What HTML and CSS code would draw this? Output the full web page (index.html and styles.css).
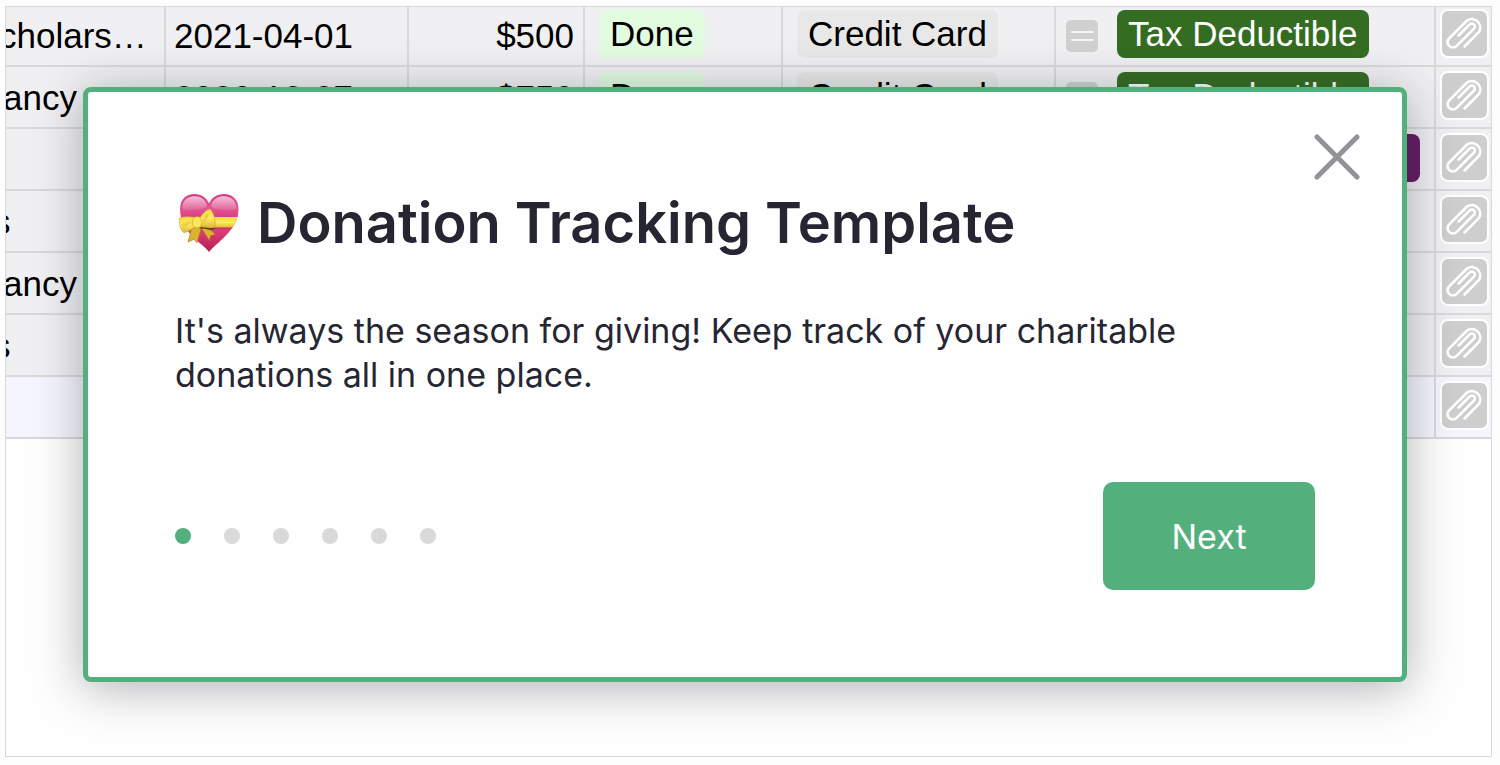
FILE: index.html
```html
<!DOCTYPE html>
<html lang="en">
<head>
<meta charset="utf-8">
<title>Donation Tracking Template</title>
<link rel="stylesheet" href="styles.css">
</head>
<body>
<svg class="defs" aria-hidden="true">
  <symbol id="clip" viewBox="0 0 138 138">
    <path d="M69 109 L113 65 A26 26 0 0 0 77 29 L22 84 A16 16 0 0 0 45 107 L98 54 A9 9 0 0 0 85 41 L51 75" fill="none" stroke="#fff" stroke-width="8" stroke-linecap="round" stroke-linejoin="round"/>
  </symbol>
  <symbol id="formula" viewBox="0 0 32 32">
    <path d="M6 12H27M6 20H27" stroke="#f5f5f5" stroke-width="2" stroke-linecap="round"/>
  </symbol>
</svg>
<main class="frame">
  <table class="grid">
    <colgroup>
      <col class="col-org"><col class="col-date"><col class="col-amount"><col class="col-status"><col class="col-method"><col class="col-tax"><col class="col-file">
    </colgroup>
    <tbody>
      <tr>
        <td class="org org-mid">cholars…</td><td class="plain">2021-04-01</td><td class="amount">$500</td>
        <td><span class="tag done">Done</span></td><td><span class="tag method">Credit Card</span></td>
        <td><div class="tax"><svg class="formula"><use href="#formula"/></svg><span class="tag deductible">Tax Deductible</span></div></td>
        <td class="file"><button class="attach" aria-label="Attachment"><svg><use href="#clip"/></svg></button></td>
      </tr>
      <tr>
        <td class="org org-far">ancy</td><td class="plain">2020-12-27</td><td class="amount">$750</td>
        <td><span class="tag done">Done</span></td><td><span class="tag method">Credit Card</span></td>
        <td><div class="tax"><svg class="formula"><use href="#formula"/></svg><span class="tag deductible">Tax Deductible</span></div></td>
        <td class="file"><button class="attach" aria-label="Attachment"><svg><use href="#clip"/></svg></button></td>
      </tr>
      <tr>
        <td></td><td></td><td></td><td></td><td></td>
        <td><div class="tax"><svg class="formula"><use href="#formula"/></svg><span class="tag other"></span></div></td>
        <td class="file"><button class="attach" aria-label="Attachment"><svg><use href="#clip"/></svg></button></td>
      </tr>
      <tr>
        <td class="org">s</td><td></td><td></td><td></td><td></td><td></td>
        <td class="file"><button class="attach" aria-label="Attachment"><svg><use href="#clip"/></svg></button></td>
      </tr>
      <tr>
        <td class="org org-far">ancy</td><td></td><td></td><td></td><td></td><td></td>
        <td class="file"><button class="attach" aria-label="Attachment"><svg><use href="#clip"/></svg></button></td>
      </tr>
      <tr>
        <td class="org">s</td><td></td><td></td><td></td><td></td><td></td>
        <td class="file"><button class="attach" aria-label="Attachment"><svg><use href="#clip"/></svg></button></td>
      </tr>
      <tr class="new-row">
        <td></td><td></td><td></td><td></td><td></td><td></td>
        <td class="file"><button class="attach" aria-label="Attachment"><svg><use href="#clip"/></svg></button></td>
      </tr>
    </tbody>
  </table>

  <section class="modal" role="dialog" aria-labelledby="title">
    <button class="close" aria-label="Close">
      <svg viewBox="0 0 46 46"><path d="M3 3L43 43M43 3L3 43" stroke="#929298" stroke-width="5" stroke-linecap="round"/></svg>
    </button>
    <h1 class="title" id="title">
      <svg class="heart" viewBox="56 38 184 180" aria-hidden="true">
        <defs>
          <linearGradient id="pink" x1="0" y1="0" x2="0" y2="1">
            <stop offset="0" stop-color="#d93a85"/><stop offset=".25" stop-color="#e0578f"/><stop offset=".4" stop-color="#dc3d83"/><stop offset=".65" stop-color="#dc3a78"/><stop offset="1" stop-color="#b01f4c"/>
          </linearGradient>
          <linearGradient id="shine" x1="0" y1="0" x2="0" y2="1">
            <stop offset="0" stop-color="#fff" stop-opacity=".7"/><stop offset="1" stop-color="#fff" stop-opacity=".08"/>
          </linearGradient>
          <linearGradient id="gold" x1="0" y1="0" x2="0" y2="1">
            <stop offset="0" stop-color="#f7dc45"/><stop offset=".5" stop-color="#fcea62"/><stop offset="1" stop-color="#dfb62c"/>
          </linearGradient>
          <clipPath id="heart-shape"><path d="M148 215C135 193 61 158 61 86C61 57 80 41 104 41C126 41 141 53 148 69C156 53 171 41 193 41C218 41 237 59 237 86C237 150 166 190 148 215Z"/></clipPath>
        </defs>
        <g clip-path="url(#heart-shape)">
          <path d="M56 38H240V218H56Z" fill="url(#pink)"/>
          <path d="M68 82C68 37 136 37 142 76C143 88 68 96 68 82Z" fill="url(#shine)"/>
          <path d="M154 76C161 37 229 37 230 82C230 96 155 90 154 76Z" fill="url(#shine)"/>
          <path d="M56 110H240V143H56Z" fill="url(#gold)"/>
          <path d="M56 143H240" stroke="#ac3550" stroke-width="3"/>
        </g>
        <path d="M116 132L94 151L85 185L103 177L112 187L125 143L149 180L153 166L167 162L148 145Z" fill="#dcb42f" stroke="#a77b1c" stroke-width="2"/>
        <path d="M107 112C91 108 71 109 60 113C57 130 63 151 73 157C89 153 104 143 112 134Z" fill="url(#gold)" stroke="#d1a527" stroke-width="2"/>
        <path d="M122 111C130 97 141 88 151 86C161 94 170 121 165 139C151 147 132 142 119 134Z" fill="url(#gold)" stroke="#d1a527" stroke-width="2"/>
        <path d="M140 101C132 110 129 123 128 132C139 127 145 115 147 99Z" fill="#efd048"/>
        <path d="M65 132C82 122 94 121 102 127C87 129 76 139 71 148Z" fill="#efd048"/>
        <path d="M100 115C105 108 119 107 124 115C128 127 126 136 119 141C109 144 99 139 98 131Z" fill="#fbe75b" stroke="#d6aa2a" stroke-width="2"/>
        <path d="M120 143C138 140 151 151 165 144" fill="none" stroke="#57401a" stroke-width="4"/>
      </svg>
      <span>Donation Tracking Template</span>
    </h1>
    <p class="text">It's always the season for giving! Keep track of your charitable donations all in one place.</p>
    <footer class="actions">
      <div class="dots"><span class="dot active"></span><span class="dot"></span><span class="dot"></span><span class="dot"></span><span class="dot"></span><span class="dot"></span></div>
      <button class="next">Next</button>
    </footer>
  </section>
</main>
</body>
</html>
```
FILE: styles.css
```css
* { box-sizing: border-box; }

body {
  margin: 0;
  min-height: 100vh;
  padding: 6px 8px 8px 5px;
  display: flex;
  background: #fdfdfd;
  font-family: Inter, "Noto Sans", sans-serif;
  color: #262633;
}

button { border: 0; padding: 0; font: inherit; cursor: pointer; }
svg { display: block; }
.defs { position: absolute; width: 0; height: 0; }

.frame {
  position: relative;
  flex: 1;
  overflow: hidden;
  background: #fefefe;
  border: 1px solid #d9d9d9;
}

/* The grid is scrolled slightly past its top-left corner. */
.grid {
  width: calc(100% + 13px);
  margin: -2px 0 0 -13px;
  table-layout: fixed;
  border-collapse: separate;
  border-spacing: 0;
  font-family: "Liberation Sans", Arial, sans-serif;
  font-size: 35px;
  line-height: 40px;
  color: #000;
}
.col-org { width: 173px; }
.col-date { width: 243px; }
.col-amount { width: 176px; }
.col-status { width: 198px; }
.col-method { width: 273px; }
.col-file { width: 55px; }

.grid td {
  height: 62px;
  padding: 0 10px 2px;
  background: #f0f0f3;
  border-right: 2px solid #d9d9da;
  border-bottom: 2px solid #d9d9da;
  white-space: nowrap;
  vertical-align: middle;
}
.grid td:last-child { border-right: 0; }
.grid td.plain { padding: 2px 8px 0; }
.grid td.org { padding: 2px 0 0; }
.grid td.org-mid { padding-left: 6px; }
.grid td.org-far { padding-left: 10px; }
.grid td.amount { padding: 2px 9px 0; text-align: right; }
.grid td.file { padding: 0 2px 4px 4px; }
.grid .new-row td { background: #f4f5fe; }

.tag {
  display: block;
  width: max-content;
  height: 48px;
  margin: 0 4px;
  padding: 0 11px;
  border-radius: 8px;
  line-height: 48px;
}
.done { background: #e2fce0; }
.method { background: #e8e8e8; }
.deductible { background: #346d22; color: #fff; }
.other { width: 303px; background: #651a65; }

.tax { display: flex; align-items: center; gap: 15px; }
.formula { width: 32px; height: 32px; margin-top: 4px; border-radius: 5px; background: #d0d0d0; }

.attach {
  display: block;
  width: 49px;
  height: 49px;
  border: 2px solid #fff;
  border-radius: 8px;
  background: #cecece;
}
.attach svg { width: 45px; height: 45px; }

.modal {
  position: absolute;
  top: 80px;
  left: 77px;
  right: 84px;
  padding: 97px 87px 87px;
  background: #fefefe;
  border: 5px solid #53b07d;
  border-radius: 8px;
  box-shadow: 0 6px 48px rgba(38, 38, 51, 0.36);
}
.close { position: absolute; top: 42px; right: 42px; width: 46px; height: 46px; background: none; }

.title {
  display: flex;
  align-items: center;
  gap: 16px;
  margin: 0;
  padding-left: 2px;
  font-size: 56px;
  line-height: 68px;
  font-weight: 600;
}
.heart { width: 64px; height: 60px; }

.text { margin: 52px 0 85px; font-size: 34px; line-height: 44px; }

.actions { display: flex; align-items: center; justify-content: space-between; }
.dots { display: flex; gap: 33px; }
.dot { width: 16px; height: 16px; border-radius: 50%; background: #d9d9d9; }
.dot.active { background: #53b07d; }
.next {
  width: 212px;
  height: 108px;
  border-radius: 10px;
  background: #53b07d;
  color: #fff;
  font-size: 34px;
}
```
